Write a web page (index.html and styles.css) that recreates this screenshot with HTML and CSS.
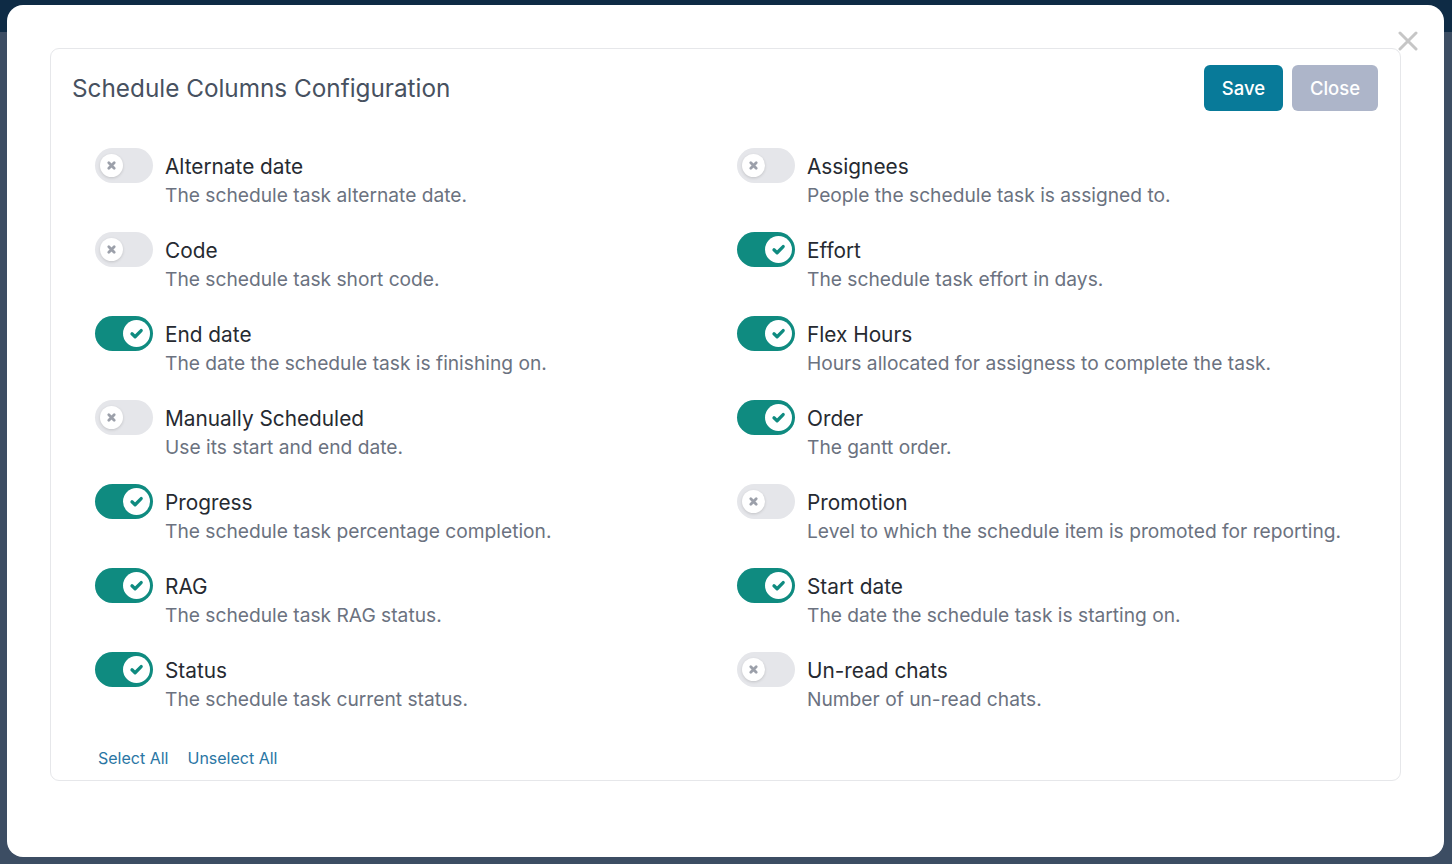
FILE: index.html
```html
<!DOCTYPE html>
<html lang="en">
<head>
<meta charset="utf-8">
<title>Schedule Columns Configuration</title>
<link rel="stylesheet" href="styles.css">
</head>
<body>
<div class="topbar"></div>
<div class="modal">
  <button class="modal-x" aria-label="Close">
    <svg width="20" height="20" viewBox="0 0 20 20"><path d="M2 2 L18 18 M18 2 L2 18" stroke="#c6c6c6" stroke-width="3" stroke-linecap="round" fill="none"/></svg>
  </button>
  <div class="card">
    <div class="card-head">
      <h2 class="title">Schedule Columns Configuration</h2>
      <div class="actions">
        <button class="btn btn-save">Save</button>
        <button class="btn btn-close">Close</button>
      </div>
    </div>
    <div class="grid">
      <div class="item"><span class="toggle off"><span class="knob"><svg viewBox="0 0 12 12"><path d="M3.5 3.5 L8.5 8.5 M8.5 3.5 L3.5 8.5"/></svg></span></span><div class="text"><div class="label">Alternate date</div><div class="desc">The schedule task alternate date.</div></div></div>
      <div class="item"><span class="toggle off"><span class="knob"><svg viewBox="0 0 12 12"><path d="M3.5 3.5 L8.5 8.5 M8.5 3.5 L3.5 8.5"/></svg></span></span><div class="text"><div class="label">Assignees</div><div class="desc">People the schedule task is assigned to.</div></div></div>
      <div class="item"><span class="toggle off"><span class="knob"><svg viewBox="0 0 12 12"><path d="M3.5 3.5 L8.5 8.5 M8.5 3.5 L3.5 8.5"/></svg></span></span><div class="text"><div class="label">Code</div><div class="desc">The schedule task short code.</div></div></div>
      <div class="item"><span class="toggle on"><span class="knob"><svg viewBox="0 0 12 12"><path d="M2.8 6.2 L5 8.3 L9.3 3.9"/></svg></span></span><div class="text"><div class="label">Effort</div><div class="desc">The schedule task effort in days.</div></div></div>
      <div class="item"><span class="toggle on"><span class="knob"><svg viewBox="0 0 12 12"><path d="M2.8 6.2 L5 8.3 L9.3 3.9"/></svg></span></span><div class="text"><div class="label">End date</div><div class="desc">The date the schedule task is finishing on.</div></div></div>
      <div class="item"><span class="toggle on"><span class="knob"><svg viewBox="0 0 12 12"><path d="M2.8 6.2 L5 8.3 L9.3 3.9"/></svg></span></span><div class="text"><div class="label">Flex Hours</div><div class="desc">Hours allocated for assigness to complete the task.</div></div></div>
      <div class="item"><span class="toggle off"><span class="knob"><svg viewBox="0 0 12 12"><path d="M3.5 3.5 L8.5 8.5 M8.5 3.5 L3.5 8.5"/></svg></span></span><div class="text"><div class="label">Manually Scheduled</div><div class="desc">Use its start and end date.</div></div></div>
      <div class="item"><span class="toggle on"><span class="knob"><svg viewBox="0 0 12 12"><path d="M2.8 6.2 L5 8.3 L9.3 3.9"/></svg></span></span><div class="text"><div class="label">Order</div><div class="desc">The gantt order.</div></div></div>
      <div class="item"><span class="toggle on"><span class="knob"><svg viewBox="0 0 12 12"><path d="M2.8 6.2 L5 8.3 L9.3 3.9"/></svg></span></span><div class="text"><div class="label">Progress</div><div class="desc">The schedule task percentage completion.</div></div></div>
      <div class="item"><span class="toggle off"><span class="knob"><svg viewBox="0 0 12 12"><path d="M3.5 3.5 L8.5 8.5 M8.5 3.5 L3.5 8.5"/></svg></span></span><div class="text"><div class="label">Promotion</div><div class="desc">Level to which the schedule item is promoted for reporting.</div></div></div>
      <div class="item"><span class="toggle on"><span class="knob"><svg viewBox="0 0 12 12"><path d="M2.8 6.2 L5 8.3 L9.3 3.9"/></svg></span></span><div class="text"><div class="label">RAG</div><div class="desc">The schedule task RAG status.</div></div></div>
      <div class="item"><span class="toggle on"><span class="knob"><svg viewBox="0 0 12 12"><path d="M2.8 6.2 L5 8.3 L9.3 3.9"/></svg></span></span><div class="text"><div class="label">Start date</div><div class="desc">The date the schedule task is starting on.</div></div></div>
      <div class="item"><span class="toggle on"><span class="knob"><svg viewBox="0 0 12 12"><path d="M2.8 6.2 L5 8.3 L9.3 3.9"/></svg></span></span><div class="text"><div class="label">Status</div><div class="desc">The schedule task current status.</div></div></div>
      <div class="item"><span class="toggle off"><span class="knob"><svg viewBox="0 0 12 12"><path d="M3.5 3.5 L8.5 8.5 M8.5 3.5 L3.5 8.5"/></svg></span></span><div class="text"><div class="label">Un-read chats</div><div class="desc">Number of un-read chats.</div></div></div>
    </div>
    <div class="links">
      <a href="#" class="link">Select All</a>
      <a href="#" class="link">Unselect All</a>
    </div>
  </div>
</div>
</body>
</html>
```

FILE: styles.css
```css
html, body {
  margin: 0;
  padding: 0;
}
body {
  width: 1452px;
  height: 864px;
  overflow: hidden;
  background: #3c4d63;
  font-family: Inter, "Noto Sans", "Liberation Sans", sans-serif;
  position: relative;
}
.topbar {
  position: absolute;
  left: 0;
  top: 0;
  width: 1452px;
  height: 32px;
  background: #0e2b45;
}
.modal {
  position: absolute;
  left: 7px;
  top: 5px;
  width: 1437px;
  height: 852px;
  background: #ffffff;
  border-radius: 16px;
  box-sizing: border-box;
  padding: 43px 0 0 43px;
}
.modal-x {
  position: absolute;
  right: 26px;
  top: 26px;
  border: 0;
  background: transparent;
  padding: 0;
  width: 20px;
  height: 20px;
  cursor: pointer;
}
.card {
  width: 1351px;
  height: 733px;
  box-sizing: border-box;
  border: 1px solid #e6e7ea;
  border-radius: 9px;
  padding: 16px 22px 0 21px;
}
.card-head {
  display: flex;
  align-items: center;
  justify-content: space-between;
  height: 46px;
}
.title {
  margin: 0;
  font-size: 24.3px;
  font-weight: 400;
  color: #475160;
  letter-spacing: 0;
}
.actions {
  display: flex;
  gap: 9px;
}
.btn {
  height: 46px;
  border: 0;
  border-radius: 6px;
  font-family: inherit;
  font-size: 18.5px;
  font-weight: 500;
  color: #ffffff;
  padding: 0;
}
.btn-save {
  background: #087a99;
  width: 79px;
}
.btn-close {
  background: #adb5c9;
  width: 86px;
}
.grid {
  display: grid;
  grid-template-columns: 642px 642px;
  row-gap: 23px;
  margin: 37px 0 0 23px;
}
.item {
  display: flex;
  gap: 12px;
  height: 61px;
}
.toggle {
  flex: none;
  width: 58px;
  height: 35px;
  border-radius: 18px;
  position: relative;
}
.toggle.off { background: #e5e6ea; }
.toggle.on { background: #0f8b80; }
.knob {
  position: absolute;
  border-radius: 50%;
  background: #ffffff;
  display: flex;
  align-items: center;
  justify-content: center;
}
.toggle.off .knob {
  left: 5px;
  top: 6px;
  width: 23px;
  height: 23px;
  box-shadow: 0 1px 3px rgba(0,0,0,0.15);
}
.toggle.on .knob {
  right: 3px;
  top: 4px;
  width: 27px;
  height: 27px;
}
.knob svg {
  fill: none;
  stroke-linecap: round;
  stroke-linejoin: round;
}
.toggle.off .knob svg { stroke: #9ca0aa; stroke-width: 2.6; width: 13px; height: 13px; }
.toggle.on .knob svg { stroke: #0f8b80; stroke-width: 2.3; width: 17px; height: 17px; }
.text {
  padding-top: 4px;
}
.label {
  font-size: 20.8px;
  line-height: 29px;
  color: #262a31;
}
.desc {
  font-size: 19.2px;
  line-height: 28px;
  color: #6b7280;
}
.links {
  display: flex;
  gap: 19px;
  margin: 33px 0 0 26px;
}
.link {
  font-size: 16px;
  line-height: 24px;
  color: #2a76a4;
  text-decoration: none;
}
```
